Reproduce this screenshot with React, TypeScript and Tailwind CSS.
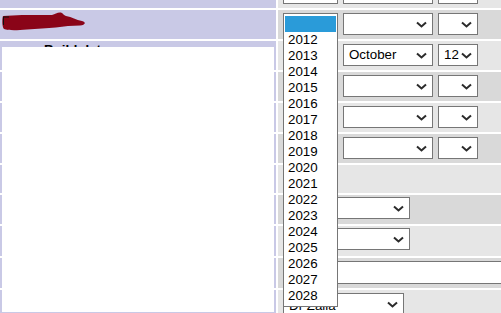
import React from "react";

const LAV = "bg-[#c9c9e6]";

type Row = {
  h: string;
  shade: "light" | "dark";
  kind: "date" | "date-oct" | "blank" | "select" | "input" | "select-name";
  pt: string;
};

const rows: Row[] = [
  { h: "h-[29px]", shade: "light", kind: "date", pt: "pt-[3px]" },
  { h: "h-[29px]", shade: "dark", kind: "date", pt: "pt-[3px]" },
  { h: "h-[29px]", shade: "light", kind: "date-oct", pt: "pt-[3px]" },
  { h: "h-[29px]", shade: "dark", kind: "date", pt: "pt-[3px]" },
  { h: "h-[29px]", shade: "light", kind: "date", pt: "pt-[3px]" },
  { h: "h-[29px]", shade: "dark", kind: "date", pt: "pt-[3px]" },
  { h: "h-[28px]", shade: "light", kind: "blank", pt: "pt-[3px]" },
  { h: "h-[29px]", shade: "dark", kind: "select", pt: "pt-[2px]" },
  { h: "h-[30px]", shade: "light", kind: "select", pt: "pt-[2px]" },
  { h: "h-[30px]", shade: "dark", kind: "input", pt: "pt-[3px]" },
  { h: "h-[29px]", shade: "light", kind: "select-name", pt: "pt-[3px]" },
];

const years = Array.from({ length: 17 }, (_, i) => String(2012 + i));

function Chevron() {
  return (
    <svg width="11" height="7" viewBox="0 0 11 7" className="shrink-0">
      <path d="M1 1.5 L5.5 5.5 L10 1.5" fill="none" stroke="#2b2b2b" strokeWidth="2" />
    </svg>
  );
}

function FakeSelect({ w, value, low }: { w: string; value?: string; low?: boolean }) {
  return (
    <div
      className={`${w} h-[22px] bg-white border border-[#767676] flex items-center justify-between pl-[5px] pr-[5px] text-black`}
    >
      <span className={low ? "leading-none translate-y-[2px]" : "leading-none"}>{value ?? ""}</span>
      <Chevron />
    </div>
  );
}

function RightCell({ row }: { row: Row }) {
  const bg = row.shade === "light" ? "bg-[#e6e6e6]" : "bg-[#d9d9d9]";
  return (
    <div className={`${row.h} ${bg} ${row.pt} pl-[5px] flex items-start gap-[5px]`}>
      {(row.kind === "date" || row.kind === "date-oct") && (
        <>
          <FakeSelect w="w-[55px]" />
          <FakeSelect w="w-[90px]" value={row.kind === "date-oct" ? "October" : undefined} />
          <FakeSelect w="w-[40px]" value={row.kind === "date-oct" ? "12" : undefined} />
        </>
      )}
      {row.kind === "select" && <FakeSelect w="w-[127px]" />}
      {row.kind === "select-name" && <FakeSelect w="w-[121px]" value="Dr Zalia" low />}
      {row.kind === "input" && (
        <div className="h-[23px] w-[260px] bg-white border border-[#767676]" />
      )}
    </div>
  );
}

export default function App() {
  return (
    <div className="relative w-[501px] h-[313px] overflow-hidden bg-white font-['Liberation_Sans',Arial,sans-serif] text-[13.33px]">
      <div className="grid grid-cols-[276px_1fr] gap-[2px] mt-[-21px]">
        {rows.map((row, i) => (
          <React.Fragment key={i}>
            <div className={`${row.h} ${LAV} relative`}>
              {i === 2 && (
                <span className="absolute left-[44px] top-[-1px] font-bold text-black">Build date</span>
              )}
            </div>
            <RightCell row={row} />
          </React.Fragment>
        ))}
      </div>

      {/* redaction scribble */}
      <svg className="absolute left-[2px] top-[12px]" width="84" height="19" viewBox="0 0 84 19">
        <path
          d="M1 4 L20 3 L50 3 C53 2 55 0.5 58 0.5 C61 0.5 61 3 64 4 C70 5 74 8 80 9 C84 10 84 13 78 13.5 L66 14 C58 15 50 16 40 16.5 L25 17.5 C14 18.5 6 18.5 2 17 C0 15 0 7 1 4 Z"
          fill="#8a0418"
        />
        <path d="M1.5 5 L1.5 13 M1.5 5 L7 5" stroke="#111" strokeWidth="1" fill="none" />
      </svg>

      {/* redaction box over the labels */}
      <div className="absolute left-[2px] top-[47px] w-[272px] h-[265px] bg-white" />

      {/* open year list */}
      <div className="absolute left-[283px] top-[13px] w-[55px] bg-white border border-[#767676] pt-[2px] pb-[2px] px-[1px] text-black">
        <div className="h-[16px] bg-[#2a9bd9]" />
        {years.map((y) => (
          <div key={y} className="h-[16px] leading-[16px] pl-[3px]">
            {y}
          </div>
        ))}
      </div>
    </div>
  );
}
